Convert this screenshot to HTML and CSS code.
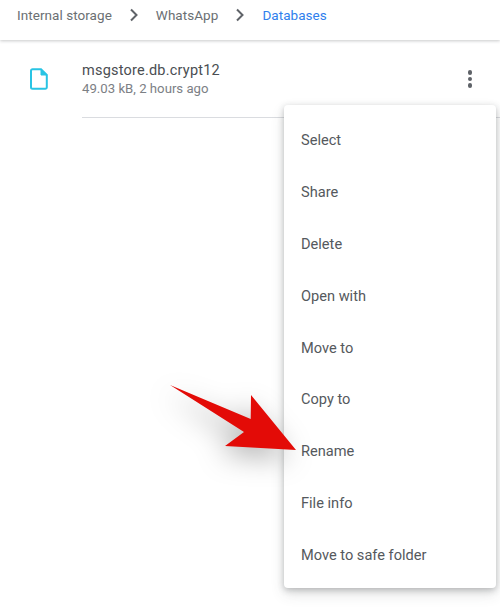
FILE: index.html
```html
<!DOCTYPE html>
<html lang="en">
    <head>
        <meta charset="UTF-8">
        <meta name="viewport" content="width=device-width, initial-scale=1.0">
        <title>Files - Databases</title>
        <link rel="stylesheet" href="styles.css">
    </head>
    <body>
        <nav class="crumbs">
            <span>Internal storage</span>
            <svg class="chevron" viewBox="0 0 10 14"><path d="M2 1.5 7.5 7 2 12.5"/></svg>
            <span>WhatsApp</span>
            <svg class="chevron" viewBox="0 0 10 14"><path d="M2 1.5 7.5 7 2 12.5"/></svg>
            <span class="current">Databases</span>
        </nav>

        <div class="file">
            <svg class="file-icon" viewBox="0 0 18 22"><path d="M2.5 1.2H11L16.8 7V19.3A1.5 1.5 0 0 1 15.3 20.8H2.5A1.5 1.5 0 0 1 1 19.3V2.7A1.5 1.5 0 0 1 2.5 1.2Z"/><path class="fold" d="M11 1.2V7H16.8Z"/></svg>
            <div class="file-text">
                <div class="file-name">msgstore.db.crypt12</div>
                <div class="file-meta">49.03 kB, 2 hours ago</div>
            </div>
            <div class="kebab"><i></i><i></i><i></i></div>
        </div>

        <ul class="menu">
            <li>Select</li>
            <li>Share</li>
            <li>Delete</li>
            <li>Open with</li>
            <li>Move to</li>
            <li>Copy to</li>
            <li>Rename</li>
            <li>File info</li>
            <li>Move to safe folder</li>
        </ul>

        <svg class="arrow" viewBox="0 0 140 80"><path d="M10 10 90.7 44 91 20 136 75 65 71 84 57Z"/></svg>
    </body>
</html>
```

FILE: styles.css
```css
html, body {
    height: 100%;
}
body {
    font-family: Roboto, 'Liberation Sans', sans-serif;
    margin: 0;
    background-color: #fff;
    color: #3c4043;
    overflow: hidden;
}
.crumbs {
    display: flex;
    align-items: center;
    height: 30px;
    padding: 0 0 10px 17px;
    font-size: 13.5px;
    letter-spacing: 0.05px;
    color: #6b6f73;
    box-shadow: 0 1px 3px rgba(60, 64, 67, 0.28);
}
.current {
    color: #2f80ed;
}
.chevron {
    width: 10px;
    height: 14px;
    margin: 0 17px;
    fill: none;
    stroke: #5f6368;
    stroke-width: 2;
}
.file {
    display: flex;
    align-items: flex-start;
    padding-top: 28px;
}
.file-icon {
    width: 18px;
    height: 22px;
    margin-left: 30px;
    fill: none;
    stroke: #29c4e4;
    stroke-width: 2;
}
.fold {
    fill: #29c4e4;
    stroke-width: 1;
}
.file-text {
    flex: 1;
    margin-left: 34px;
    height: 49px;
    border-bottom: 1px solid #dadce0;
}
.file-name {
    font-size: 14.5px;
    line-height: 16px;
    margin-top: -5px;
    letter-spacing: 0.22px;
    color: #4a4e52;
}
.file-meta {
    font-size: 13.2px;
    line-height: 16px;
    margin-top: 2px;
    color: #7c8085;
}
.kebab {
    display: flex;
    flex-direction: column;
    gap: 2px;
    margin: 2px 28px 0 0;
    position: absolute;
    right: 0;
}
.kebab i {
    width: 4.5px;
    height: 4.5px;
    border-radius: 50%;
    background-color: #5f6368;
}
.menu {
    position: absolute;
    left: 284px;
    top: 105px;
    width: 212px;
    height: 483px;
    box-sizing: border-box;
    margin: 0;
    padding: 9px 0 7px;
    list-style: none;
    background-color: #fff;
    border-radius: 4px;
    box-shadow: 0 2px 6px rgba(60, 64, 67, 0.3), 0 6px 14px rgba(60, 64, 67, 0.15);
}
.menu li {
    height: 51.88px;
    line-height: 53px;
    padding-left: 17px;
    font-size: 14.6px;
    color: #55595d;
}
.arrow {
    position: absolute;
    left: 160px;
    top: 375px;
    width: 140px;
    height: 80px;
    fill: #e30b07;
    overflow: visible;
    filter: drop-shadow(-6px 8px 14px rgba(0, 0, 0, 0.3));
}
```
